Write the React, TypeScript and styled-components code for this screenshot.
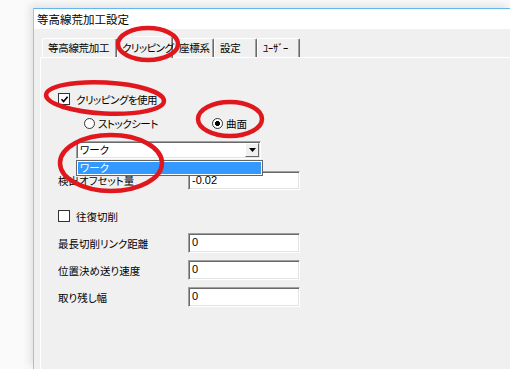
import styled, { createGlobalStyle } from 'styled-components';

const GlobalStyle = createGlobalStyle`
    html, body {
        margin: 0;
        padding: 0;
    }
    body {
        width: 510px;
        height: 369px;
        overflow: hidden;
        background: #fafafa;
        color: #000;
        font-family: "Noto Sans CJK JP", "Noto Sans", sans-serif;
        font-size: 10.5px;
        font-feature-settings: "palt";
    }
`;

type tabProps = { width: number; active?: boolean };

const tabs = [
    { label: '等高線荒加工', width: 75 },
    { label: 'クリッピング', width: 56, active: true },
    { label: '座標系', width: 41 },
    { label: '設定', width: 43 },
    { label: 'ﾕｰｻﾞｰ', width: 43 },
];

const fields = [
    { label: '最長切削リンク距離', value: '0', gap: 10 },
    { label: '位置決め送り速度', value: '0', gap: 7 },
    { label: '取り残し幅', value: '0', gap: 7 },
];

const CheckIcon = () => (
    <svg width="9" height="9" viewBox="0 0 9 9">
        <path d="M1.5 4.2 L3.6 6.6 L7.6 1.8" fill="none" stroke="#000" strokeWidth="1.6" />
    </svg>
);

const App = () => {
    return (
        <>
            <GlobalStyle />
            <Screen>
                <Window>
                    <TitleBar>等高線荒加工設定</TitleBar>
                    <Client>
                        <TabStrip>
                            {tabs.map(t => (
                                <Tab key={t.label} width={t.width} active={t.active}>
                                    {t.label}
                                </Tab>
                            ))}
                        </TabStrip>
                        <Panel>
                            <CheckRow top={34}>
                                <Box>
                                    <CheckIcon />
                                </Box>
                                <Tight>クリッピングを使用</Tight>
                            </CheckRow>
                            <RadioRow>
                                <RadioItem width={128}>
                                    <Radio />
                                    <Tight>ストックシート</Tight>
                                </RadioItem>
                                <RadioItem width={60}>
                                    <Radio checked />
                                    <span>曲面</span>
                                </RadioItem>
                            </RadioRow>
                            <Combo>
                                <ComboText>ワーク</ComboText>
                                <ComboButton>
                                    <svg width="7" height="4" viewBox="0 0 7 4">
                                        <path d="M0 0 H7 L3.5 4 Z" fill="#000" />
                                    </svg>
                                </ComboButton>
                                <DropList>
                                    <DropItem>ワーク</DropItem>
                                </DropList>
                            </Combo>
                            <Field gap={12}>
                                <Label>検出オフセット量</Label>
                                <Input height={19}>-0.02</Input>
                            </Field>
                            <CheckRow top={19}>
                                <Box />
                                <span>往復切削</span>
                            </CheckRow>
                            {fields.map(f => (
                                <Field key={f.label} gap={f.gap}>
                                    <Label>{f.label}</Label>
                                    <Input height={20}>{f.value}</Input>
                                </Field>
                            ))}
                        </Panel>
                    </Client>
                </Window>
                <Marks width="510" height="369" viewBox="0 0 510 369">
                    <g fill="none" stroke="#e1171e" strokeWidth="4.5">
                        <ellipse cx="148" cy="44" rx="30" ry="16" />
                        <ellipse cx="105" cy="98" rx="59" ry="15.5" transform="rotate(3 105 98)" />
                        <ellipse cx="230" cy="119" rx="32" ry="17" />
                        <ellipse cx="111" cy="163" rx="51" ry="28" />
                    </g>
                </Marks>
            </Screen>
        </>
    );
};

export default App;

const Screen = styled.div`
    position: relative;
    width: 510px;
    height: 369px;
    padding: 8px 0 0 33px;
    box-sizing: border-box;
    display: flex;
    overflow: hidden;
`;
const Window = styled.div`
    flex: 1;
    display: flex;
    flex-direction: column;
    border-top: 1px solid #62b8ec;
    border-left: 1px solid #8ccbf1;
    box-shadow: -3px -3px 8px rgba(0, 0, 0, 0.1);
`;
const TitleBar = styled.div`
    height: 20px;
    line-height: 20px;
    padding-left: 3px;
    background: #fff;
    font-size: 11.5px;
    font-feature-settings: normal;
`;
const Client = styled.div`
    flex: 1;
    display: flex;
    flex-direction: column;
    background: #f0f0f0;
    padding: 6px 0 0 6px;
`;
const TabStrip = styled.div`
    display: flex;
    align-items: flex-end;
    height: 22px;
    padding-left: 2px;
`;
const Tab = styled.div<tabProps>`
    position: relative;
    z-index: ${({ active }) => (active ? 1 : 0)};
    box-sizing: border-box;
    width: ${({ width }) => width}px;
    height: ${({ active }) => (active ? 22 : 19)}px;
    margin-bottom: ${({ active }) => (active ? -1 : 0)}px;
    padding: ${({ active }) => (active ? '3px 0 0 4px' : '1px 0 0 5px')};
    background: #f0f0f0;
    border-top: 1px solid #fff;
    border-left: 1px solid #fff;
    border-right: 1px solid #696969;
    box-shadow: inset -1px 0 #a0a0a0;
    border-radius: 2px 2px 0 0;
    white-space: nowrap;
    line-height: 16px;
    letter-spacing: ${({ active }) => (active ? -0.6 : -0.3)}px;
`;
const Panel = styled.div`
    flex: 1;
    display: flex;
    flex-direction: column;
    border-top: 1px solid #fff;
    border-left: 1px solid #fff;
    padding-left: 17px;
`;
const CheckRow = styled.div<{ top: number }>`
    display: flex;
    align-items: center;
    gap: 6px;
    height: 14px;
    margin-top: ${({ top }) => top}px;
`;
const Tight = styled.span`
    letter-spacing: -0.5px;
`;
const Box = styled.div`
    box-sizing: border-box;
    width: 12px;
    height: 12px;
    border: 1px solid #333;
    background: #fff;
    display: flex;
    align-items: center;
    justify-content: center;
`;
const RadioRow = styled.div`
    display: flex;
    height: 14px;
    margin-top: 10px;
    padding-left: 26px;
`;
const RadioItem = styled.div<{ width: number }>`
    display: flex;
    align-items: center;
    gap: 3px;
    width: ${({ width }) => width}px;
`;
const Radio = styled.div<{ checked?: boolean }>`
    box-sizing: border-box;
    width: 11px;
    height: 11px;
    border-radius: 50%;
    border: 1px solid #333;
    background: ${({ checked }) =>
        checked ? 'radial-gradient(circle, #000 0 2.2px, #fff 2.8px)' : '#fff'};
`;
const Combo = styled.div`
    position: relative;
    z-index: 2;
    box-sizing: border-box;
    display: flex;
    width: 185px;
    height: 18px;
    margin: 11px 0 0 18px;
    background: #fff;
    border: 1px solid;
    border-color: #a0a0a0 #fff #fff #a0a0a0;
    box-shadow: inset 1px 1px #696969, inset -1px -1px #e3e3e3;
`;
const ComboText = styled.div`
    flex: 1;
    padding-left: 3px;
    line-height: 16px;
`;
const ComboButton = styled.div`
    box-sizing: border-box;
    width: 14px;
    height: 14px;
    margin: 1px 1px 0 0;
    background: #f0f0f0;
    border: 1px solid;
    border-color: #fff #696969 #696969 #fff;
    display: flex;
    align-items: center;
    justify-content: center;
`;
const DropList = styled.div`
    position: absolute;
    top: 18px;
    left: -1px;
    box-sizing: border-box;
    width: 187px;
    height: 16px;
    padding: 1px;
    background: #fff;
    border: 1px solid #646464;
`;
const DropItem = styled.div`
    height: 12px;
    line-height: 12px;
    padding-left: 2px;
    background: #3399ff;
    color: #fff;
`;
const Field = styled.div<{ gap: number }>`
    display: flex;
    align-items: center;
    margin-top: ${({ gap }) => gap}px;
`;
const Label = styled.div`
    width: 130px;
    white-space: nowrap;
`;
const Input = styled.div<{ height: number }>`
    box-sizing: border-box;
    width: 112px;
    height: ${({ height }) => height}px;
    padding-left: 3px;
    line-height: ${({ height }) => height - 3}px;
    font-family: "Liberation Sans", sans-serif;
    font-size: 11px;
    background: #fff;
    border: 1px solid;
    border-color: #a0a0a0 #fff #fff #a0a0a0;
    box-shadow: inset 1px 1px #696969, inset -1px -1px #e3e3e3;
`;
const Marks = styled.svg`
    position: absolute;
    top: 0;
    left: 0;
    pointer-events: none;
    z-index: 5;
`;
